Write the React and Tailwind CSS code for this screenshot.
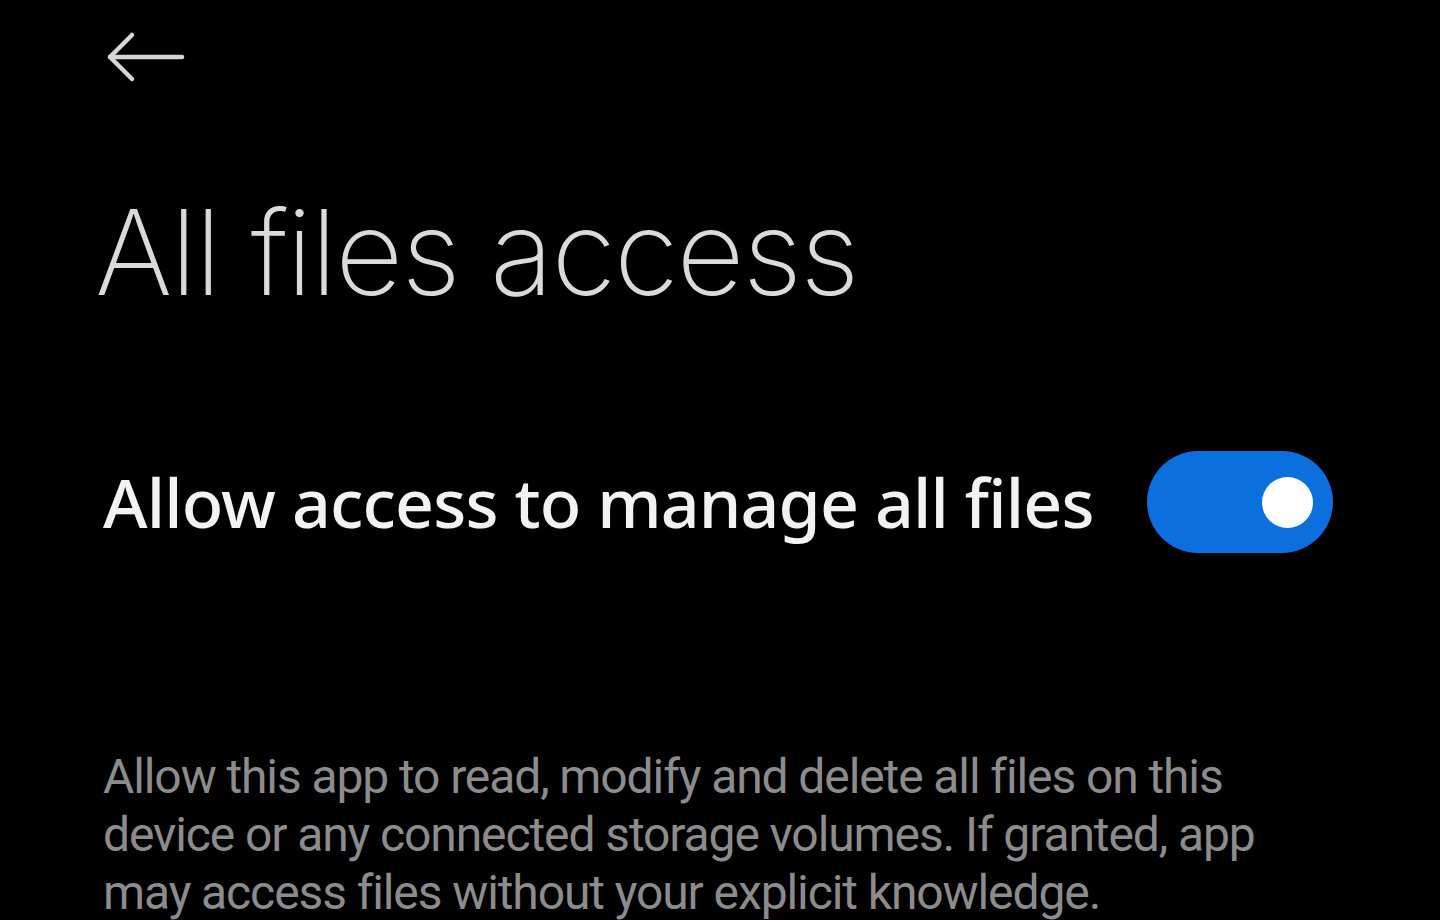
export default function App() {
  return (
    <main className="w-[1440px] h-[920px] overflow-hidden bg-black font-['Inter',sans-serif]">
      <header className="pl-[106px] pt-[31px]">
        <svg width="80" height="52" viewBox="0 0 80 52" fill="none" stroke="#d6d6d6" strokeWidth="4.5" strokeLinecap="round" strokeLinejoin="round">
          <path d="M4 26 H76" />
          <path d="M26 4 L4 26 L26 48" />
        </svg>
      </header>

      <h1 className="mt-[110px] pl-[95px] text-[118px] leading-none font-extralight text-[#dadada] tracking-[-2px]">
        All files access
      </h1>

      <section className="mt-[140px] pl-[103px] pr-[107px] flex items-center justify-between">
        <span className="font-['Noto_Sans',sans-serif] font-medium text-[68px] text-[#f2f2f2] leading-none tracking-[-0.85px]">
          Allow access to manage all files
        </span>
        <button className="w-[186px] h-[102px] rounded-full bg-[#0b6fdd] flex items-center justify-end pr-[20px]">
          <span className="w-[51px] h-[51px] rounded-full bg-white" />
        </button>
      </section>

      <p className="mt-[195px] pl-[103px] w-[1270px] font-['Roboto',sans-serif] text-[48px] leading-[58px] tracking-[-1.1px] text-[#8c8c8c]">
        Allow this app to read, modify and delete all files on this device or any connected storage volumes. If granted, app may access files without your explicit knowledge.
      </p>
    </main>
  );
}
